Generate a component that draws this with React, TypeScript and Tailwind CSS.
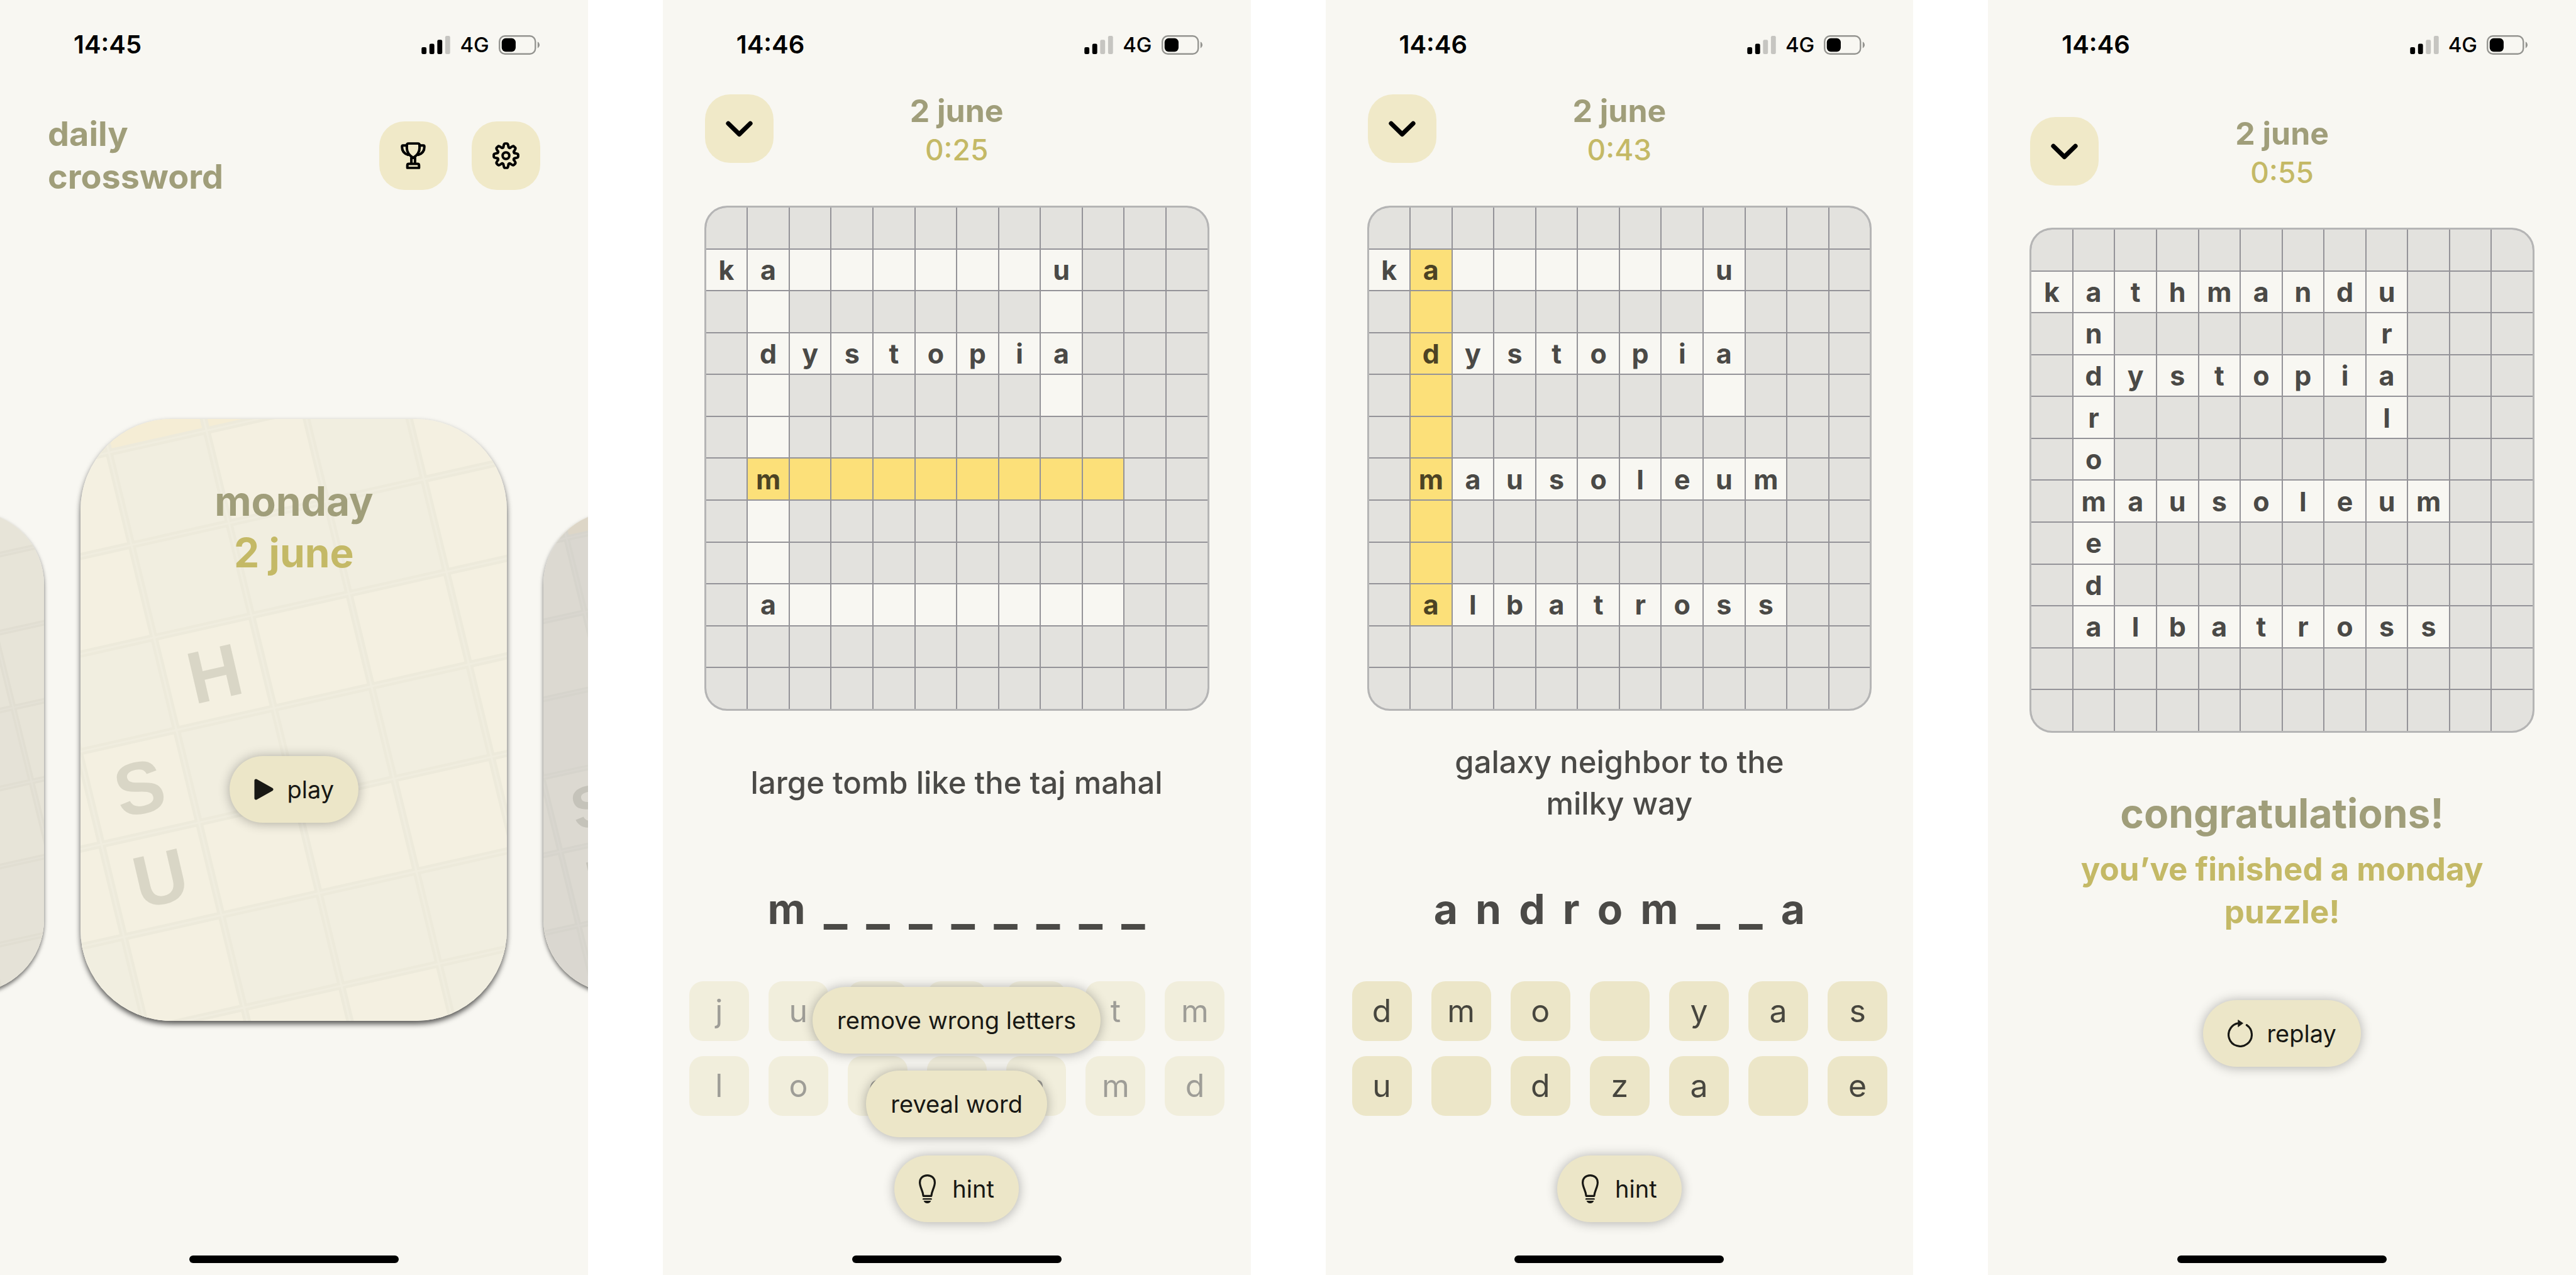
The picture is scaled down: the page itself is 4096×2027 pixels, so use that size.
import type { ReactNode } from "react";

function StatusBar({ time, bars }: { time: string; bars: number }) {
  const tone = (n: number) => (bars >= n ? "#000" : "#c6c5c1");
  return (
    <div className="flex h-[142px] shrink-0 items-center justify-between pr-[77px] pl-[117px]">
      <time className="text-[40px] leading-[48px] font-semibold text-black">{time}</time>
      <div className="flex items-center gap-[15px]">
        <svg className="h-[29px] w-[46px]" viewBox="0 0 58 37" aria-label="signal">
          <rect x="0" y="23" width="10" height="14" rx="3" fill={tone(1)} />
          <rect x="16" y="16" width="10" height="21" rx="3" fill={tone(2)} />
          <rect x="32" y="8" width="10" height="29" rx="3" fill={tone(3)} />
          <rect x="48" y="0" width="10" height="37" rx="3" fill={tone(4)} />
        </svg>
        <span className="text-[33px] leading-[40px] font-medium text-black">4G</span>
        <svg className="h-[31px] w-[65px]" viewBox="0 0 82 39" aria-label="battery">
          <rect x="1.5" y="1.5" width="72" height="36" rx="11" fill="none" stroke="#949490" strokeWidth="3" />
          <rect x="6" y="6" width="28" height="27" rx="8" fill="#000" />
          <path d="M78 13 C80.5 14.5 82 17 82 19.5 C82 22 80.5 24.5 78 26 Z" fill="#949490" />
        </svg>
      </div>
    </div>
  );
}

function Screen({ time, bars, children }: { time: string; bars: number; children: ReactNode }) {
  return (
    <section className="flex min-h-screen min-w-0 flex-col overflow-x-clip bg-[#f8f7f2]">
      <StatusBar time={time} bars={bars} />
      {children}
      <div className="mx-auto mt-auto mb-[19px] h-3 w-[333px] shrink-0 rounded-full bg-black" />
    </section>
  );
}

function SquareButton({ label, children }: { label: string; children: ReactNode }) {
  return (
    <button
      type="button"
      aria-label={label}
      className="flex size-[109px] shrink-0 items-center justify-center rounded-[40px] bg-[#f0e9c8] text-black"
    >
      {children}
    </button>
  );
}

function PillButton({ children }: { children: ReactNode }) {
  return (
    <button
      type="button"
      className="flex h-[106px] items-center rounded-full bg-[#ece6c8] px-[39px] text-[38px] leading-[48px] whitespace-nowrap text-[#181814] shadow-[0_1px_18px_rgba(0,0,0,0.3)]"
    >
      {children}
    </button>
  );
}

function TrophyIcon() {
  return (
    <svg className="h-[43px] w-10" viewBox="0 0 150 162" fill="none" stroke="currentColor" strokeWidth="15" strokeLinejoin="round" strokeLinecap="round">
      <path d="M37 18 Q37 8 47 8 H103 Q113 8 113 18 V36 C113 62 98 80 75 94 C52 80 37 62 37 36 Z" />
      <path d="M36 20 H14 Q8 20 8 28 C8 52 20 68 44 76" />
      <path d="M114 20 H136 Q142 20 142 28 C142 52 130 68 106 76" />
      <path d="M64 94 V126 M86 94 V126" />
      <path d="M40 154 V139 Q40 130 49 130 H101 Q110 130 110 139 V154 Z" />
    </svg>
  );
}

function GearIcon() {
  return (
    <svg className="size-[43px]" viewBox="-81 -81 162 162" fill="none" stroke="currentColor" strokeWidth="15" strokeLinejoin="round" strokeLinecap="round">
      {[0, 45, 90, 135, 180, 225, 270, 315].map((a) => (
        <g key={a} transform={`rotate(${a})`}>
          <path d="M-16 -50 L-12 -67 Q-10 -73 -5 -73 H5 Q10 -73 12 -67 L16 -50 Q18 -47 23.5 -47.5" />
          <path d="M-16 -50 Q-18 -47 -23.5 -47.5" />
        </g>
      ))}
      <circle r="20" />
    </svg>
  );
}

function ChevronIcon() {
  return (
    <svg className="h-[26px] w-[43px]" viewBox="0 0 54 32" fill="none" stroke="currentColor" strokeWidth="9" strokeLinecap="round" strokeLinejoin="round">
      <path d="M5 5 L27 26.5 L49 5" />
    </svg>
  );
}

function BulbIcon() {
  return (
    <svg className="h-[46px] w-[27px]" viewBox="0 0 102 174">
      <path
        d="M27 130 C25 98 6 78 6 49 C6 23 25 6 51 6 C77 6 96 23 96 49 C96 78 77 98 75 130 Z"
        fill="none"
        stroke="currentColor"
        strokeWidth="12"
        strokeLinejoin="round"
      />
      <path d="M27 148 H74" stroke="currentColor" strokeWidth="9" strokeLinecap="round" />
      <path d="M29 159 H73 C70 169 61 174 51 174 C41 174 32 169 29 159 Z" fill="currentColor" />
    </svg>
  );
}

function ReplayIcon() {
  return (
    <svg className="h-11 w-10" viewBox="0 0 153 168">
      <path d="M116 33 A70.5 70.5 0 1 1 76.5 21" fill="none" stroke="currentColor" strokeWidth="12" strokeLinecap="round" />
      <path d="M64 2 L94 22 L64 44 Z" fill="currentColor" stroke="currentColor" strokeWidth="3" strokeLinejoin="round" />
    </svg>
  );
}

/* Tilted crossword behind each puzzle card; the grid is drawn in skewed unit cells. */
const shaded: [number, number][] = [
  [0, -2], [2, -2], [0, -1], [1, -1], [2, -1], [-2, 0], [-1, 0], [0, 1], [1, 1], [2, 1],
  [-2, 3], [0, 3], [1, 3], [2, 3], [3, 3], [2, 4],
];
const columns = [-3, -2, -1, 0, 1, 2, 3, 4, 5, 6];
const lines = [-5, -4, -3, -2, -1, 0, 1, 2, 3, 4, 5, 6, 7, 8];

function CardPattern({ letters = true }: { letters?: boolean }) {
  return (
    <svg className="absolute inset-0 size-full" viewBox="0 0 853 1207" preserveAspectRatio="none" aria-hidden="true">
      <rect width="853" height="1207" fill="#f4f0e1" />
      <g transform="matrix(195 -43.9 45 185.5 147 438.4)">
        {shaded.map(([x, y]) => (
          <rect key={`${x},${y}`} x={x} y={y} width="1" height="1" fill="#f1eee0" />
        ))}
        <rect x="-3" y="-4" width="7" height="2" fill="#f5edd5" />
        {columns.map((n) => (
          <path key={n} d={`M${n} -5 V8`} stroke="#edeadb" strokeWidth="0.075" />
        ))}
        {lines.map((n) => (
          <path key={n} d={`M-4 ${n} H7`} stroke="#edeadb" strokeWidth="0.075" />
        ))}
        {columns.map((n) => (
          <path key={n} d={`M${n} -5 V8`} stroke="#f0eddf" strokeWidth="0.02" />
        ))}
        {lines.map((n) => (
          <path key={n} d={`M-4 ${n} H7`} stroke="#f0eddf" strokeWidth="0.02" />
        ))}
      </g>
      {letters && (
        <g fill="#d9d6c6" fontFamily="Liberation Sans, sans-serif" fontWeight="700" fontSize="148" textAnchor="middle">
          <text transform="translate(268 510) rotate(-13)" y="52">H</text>
          <text transform="translate(118 739) rotate(-13)" y="52">S</text>
          <text transform="translate(160 920) rotate(-13)" y="52">U</text>
        </g>
      )}
    </svg>
  );
}

function SideCard({ tint, letters }: { tint: string; letters: boolean }) {
  return (
    <div className="relative mb-[45px] h-[765px] w-[549px] shrink-0 overflow-hidden rounded-[116px] shadow-[0_4px_6px_rgba(0,0,0,0.55)]">
      <CardPattern letters={letters} />
      <div className={`absolute inset-0 ${tint}`} />
    </div>
  );
}

function HomeScreen() {
  return (
    <Screen time="14:45" bars={3}>
      <header className="mt-[37px] flex items-center justify-between px-[76px]">
        <h1 className="text-[54px] leading-[68px] font-bold text-[#a09e7a]">
          daily
          <br />
          crossword
        </h1>
        <div className="flex gap-[38px]">
          <SquareButton label="trophies">
            <TrophyIcon />
          </SquareButton>
          <SquareButton label="settings">
            <GearIcon />
          </SquareButton>
        </div>
      </header>
      <main className="mt-[351px] flex items-end justify-center gap-[58px]">
        <SideCard tint="bg-[#5a5a78]/8" letters={false} />
        <article className="relative flex h-[957px] w-[678px] shrink-0 flex-col items-center overflow-hidden rounded-[145px] pt-[90px] shadow-[0_5px_8px_rgba(0,0,0,0.65)]">
          <CardPattern />
          <h2 className="relative text-center text-[64px] leading-[82px] font-bold text-[#a09e7a]">
            monday
            <br />
            <span className="text-[#c4b966]">2 june</span>
          </h2>
          <div className="relative mt-[282px]">
            <PillButton>
              <svg className="mr-[22px] h-[34px] w-[31px]" viewBox="0 0 31 34">
                <path d="M3 3 L28 17 L3 31 Z" fill="currentColor" stroke="currentColor" strokeWidth="5" strokeLinejoin="round" />
              </svg>
              play
            </PillButton>
          </div>
        </article>
        <SideCard tint="bg-[#5a5a78]/15" letters />
      </main>
    </Screen>
  );
}

/* "#" is a blocked cell, "." an open one; capitals and "*" are highlighted. */
const startedGrid = [
  "############",
  "ka......u###",
  "#.######.###",
  "#dystopia###",
  "#.######.###",
  "#.##########",
  "#M********##",
  "#.##########",
  "#.##########",
  "#a........##",
  "############",
  "############",
];
const halfwayGrid = [
  "############",
  "kA......u###",
  "#*######.###",
  "#Dystopia###",
  "#*######.###",
  "#*##########",
  "#Mausoleum##",
  "#*##########",
  "#*##########",
  "#Albatross##",
  "############",
  "############",
];
const finishedGrid = [
  "############",
  "kathmandu###",
  "#n######r###",
  "#dystopia###",
  "#r######l###",
  "#o##########",
  "#mausoleum##",
  "#e##########",
  "#d##########",
  "#albatross##",
  "############",
  "############",
];

function cellTone(c: string) {
  if (c === "#") return "bg-[#e3e2de]";
  if (c === "*" || (c >= "A" && c <= "Z")) return "bg-[#fce079] text-[#4c4324]";
  return "bg-[#f8f7f2] text-[#4a4946]";
}

function Crossword({ rows }: { rows: string[] }) {
  return (
    <div className="mx-[66px] grid aspect-square grid-cols-12 grid-rows-12 gap-[2px] overflow-hidden rounded-[36px] border-[3px] border-[#b5b5b5] bg-[#949398]">
      {rows.flatMap((row, y) =>
        row.split("").map((c, x) => (
          <div
            key={`${x},${y}`}
            className={`flex min-h-0 min-w-0 items-center justify-center text-[43px] leading-[48px] font-bold ${cellTone(c)}`}
          >
            {/[a-z]/i.test(c) ? c.toLowerCase() : ""}
          </div>
        ))
      )}
    </div>
  );
}

function PuzzleHeader({ time }: { time: string }) {
  return (
    <header className="grid grid-cols-[1fr_auto_1fr] px-[67px]">
      <SquareButton label="back">
        <ChevronIcon />
      </SquareButton>
      <div className="-mt-[6px] text-center">
        <h2 className="text-[50px] leading-[64px] font-bold text-[#a09e7a]">2 june</h2>
        <p className="text-[46px] leading-[60px] font-medium text-[#c4b966]">{time}</p>
      </div>
      <span />
    </header>
  );
}

function Keyboard({ letters, dimmed }: { letters: string; dimmed?: boolean }) {
  return (
    <div className={`mt-[80px] grid grid-cols-7 gap-x-[31px] gap-y-6 pr-[41px] pl-[42px] ${dimmed ? "opacity-50" : ""}`}>
      {letters.split("").map((c, n) => (
        <button
          key={n}
          type="button"
          aria-label={c === " " ? "used letter" : c}
          className="h-[95px] rounded-[22px] bg-[#ece6c8] text-[50px] leading-[60px] text-[#47463e]"
        >
          {c}
        </button>
      ))}
    </div>
  );
}

function PlayScreen(props: { time: string; rows: string[]; clue: string; answer: string; letters: string; menuOpen?: boolean }) {
  const { time, rows, clue, answer, letters, menuOpen } = props;
  return (
    <Screen time="14:46" bars={2}>
      <div className="mt-2">
        <PuzzleHeader time={time} />
      </div>
      <main className="flex flex-col">
        <div className="mt-[59px]">
          <Crossword rows={rows} />
        </div>
        <div className="mt-[49px] flex h-[132px] items-center justify-center px-[138px]">
          <p className="text-center text-[49px] leading-[66px] font-medium text-[#4b4a47]">{clue}</p>
        </div>
        <div className="mt-[89px] flex h-20 items-baseline justify-center gap-[28px] text-[66px] leading-[80px] font-bold text-[#4b4a47]">
          {answer.split("").map((c, n) => (
            <span key={n} className={c === "_" ? "mx-px text-[79px]" : ""}>
              {c}
            </span>
          ))}
        </div>
        <Keyboard letters={letters} dimmed={menuOpen} />
        <div className="relative mx-auto mt-[63px]">
          {menuOpen && (
            <div className="absolute bottom-full left-1/2 mb-[29px] flex -translate-x-1/2 flex-col items-center gap-[27px]">
              <PillButton>remove wrong letters</PillButton>
              <PillButton>reveal word</PillButton>
            </div>
          )}
          <PillButton>
            <span className="mr-[26px]">
              <BulbIcon />
            </span>
            hint
          </PillButton>
        </div>
      </main>
    </Screen>
  );
}

function FinishedScreen() {
  return (
    <Screen time="14:46" bars={2}>
      <div className="mt-11">
        <PuzzleHeader time="0:55" />
      </div>
      <main className="flex flex-col">
        <div className="mt-[58px]">
          <Crossword rows={finishedGrid} />
        </div>
        <h1 className="mt-[88px] text-center text-[64px] leading-[80px] font-bold text-[#a09e7a]">congratulations!</h1>
        <p className="mt-[15px] px-[138px] text-center text-[51px] leading-[68px] font-bold text-[#c4b966]">
          you’ve finished a monday puzzle!
        </p>
        <div className="mx-auto mt-[106px]">
          <PillButton>
            <span className="mr-[22px]">
              <ReplayIcon />
            </span>
            replay
          </PillButton>
        </div>
      </main>
    </Screen>
  );
}

export default function App() {
  return (
    <div className="grid min-h-screen grid-cols-4 gap-x-[119px] bg-white font-['Inter',sans-serif]">
      <HomeScreen />
      <PlayScreen
        time="0:25"
        rows={startedGrid}
        clue="large tomb like the taj mahal"
        answer="m________"
        letters="ju   tmloe amd"
        menuOpen
      />
      <PlayScreen
        time="0:43"
        rows={halfwayGrid}
        clue="galaxy neighbor to the milky way"
        answer="androm__a"
        letters="dmo yasu dza e"
      />
      <FinishedScreen />
    </div>
  );
}
